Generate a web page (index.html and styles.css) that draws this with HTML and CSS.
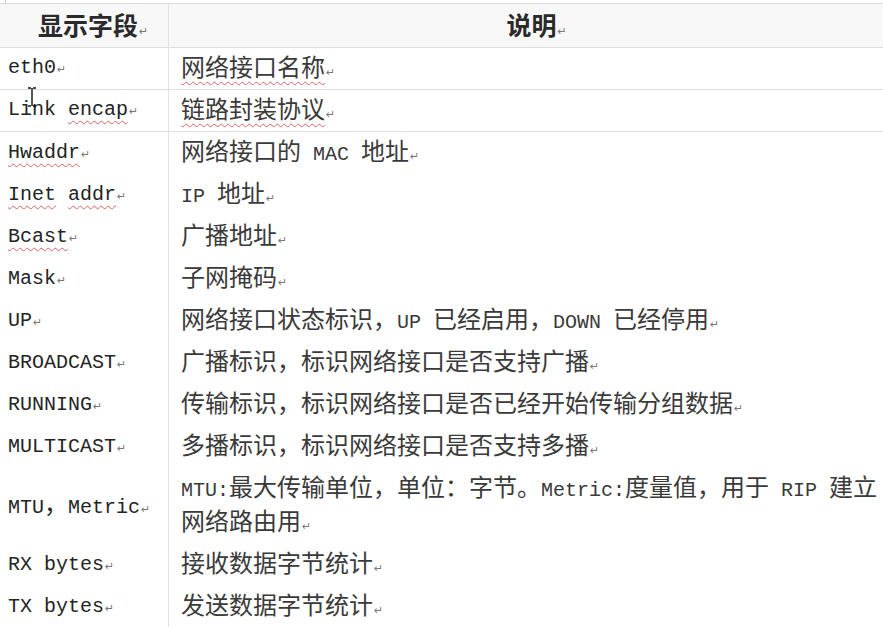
FILE: index.html
```html
<!DOCTYPE html>
<html lang="zh-CN">
<head>
    <meta charset="UTF-8">
    <title>ifconfig 显示字段</title>
    <link rel="stylesheet" href="styles.css">
</head>
<body>
    <span class="handle"></span>
    <div class="sheet">
        <div class="row head">
            <div class="cell key"><p>显示字段<span class="pm">↵</span></p></div>
            <div class="cell desc"><p>说明<span class="pm">↵</span></p></div>
        </div>
        <div class="row line">
            <div class="cell key"><p>eth0<span class="pm">↵</span></p></div>
            <div class="cell desc"><p><span class="typo">网络接口名称</span><span class="pm">↵</span></p></div>
        </div>
        <div class="row line">
            <div class="cell key"><p>Link <span class="typo">encap</span><span class="pm">↵</span></p></div>
            <div class="cell desc"><p><span class="typo">链路封装协议</span><span class="pm">↵</span></p></div>
        </div>
        <div class="row">
            <div class="cell key"><p><span class="typo">Hwaddr</span><span class="pm">↵</span></p></div>
            <div class="cell desc"><p>网络接口的<span class="en"> MAC </span>地址<span class="pm">↵</span></p></div>
        </div>
        <div class="row">
            <div class="cell key"><p><span class="typo">Inet</span> <span class="typo">addr</span><span class="pm">↵</span></p></div>
            <div class="cell desc"><p><span class="en">IP </span>地址<span class="pm">↵</span></p></div>
        </div>
        <div class="row">
            <div class="cell key"><p><span class="typo">Bcast</span><span class="pm">↵</span></p></div>
            <div class="cell desc"><p>广播地址<span class="pm">↵</span></p></div>
        </div>
        <div class="row">
            <div class="cell key"><p>Mask<span class="pm">↵</span></p></div>
            <div class="cell desc"><p>子网掩码<span class="pm">↵</span></p></div>
        </div>
        <div class="row">
            <div class="cell key"><p>UP<span class="pm">↵</span></p></div>
            <div class="cell desc"><p>网络接口状态标识，<span class="en">UP </span>已经启用，<span class="en">DOWN </span>已经停用<span class="pm">↵</span></p></div>
        </div>
        <div class="row">
            <div class="cell key"><p>BROADCAST<span class="pm">↵</span></p></div>
            <div class="cell desc"><p>广播标识，标识网络接口是否支持广播<span class="pm">↵</span></p></div>
        </div>
        <div class="row">
            <div class="cell key"><p>RUNNING<span class="pm">↵</span></p></div>
            <div class="cell desc"><p>传输标识，标识网络接口是否已经开始传输分组数据<span class="pm">↵</span></p></div>
        </div>
        <div class="row">
            <div class="cell key"><p>MULTICAST<span class="pm">↵</span></p></div>
            <div class="cell desc"><p>多播标识，标识网络接口是否支持多播<span class="pm">↵</span></p></div>
        </div>
        <div class="row tall">
            <div class="cell key"><p>MTU<span class="cjk">，</span>Metric<span class="pm">↵</span></p></div>
            <div class="cell desc"><p><span class="nowrap"><span class="en">MTU:</span>最大传输单位，单位：字节。<span class="en">Metric:</span>度量值，用于<span class="en"> RIP </span>建立</span><br>网络路由用<span class="pm">↵</span></p></div>
        </div>
        <div class="row">
            <div class="cell key"><p>RX bytes<span class="pm">↵</span></p></div>
            <div class="cell desc"><p>接收数据字节统计<span class="pm">↵</span></p></div>
        </div>
        <div class="row">
            <div class="cell key"><p>TX bytes<span class="pm">↵</span></p></div>
            <div class="cell desc"><p>发送数据字节统计<span class="pm">↵</span></p></div>
        </div>

        <!-- mouse cursor over the Link row -->
        <svg class="cursor" width="10" height="20" viewBox="0 0 10 20">
            <path d="M1 1h3M6 1h3M5 1v18M1 19h3M6 19h3" stroke="#111" stroke-width="1.4" fill="none"/>
        </svg>
    </div>
</body>
</html>
```

FILE: styles.css
```css
body {
    margin: 0;
    background: #fff;
    overflow: hidden;
    font-family: "Noto Sans CJK SC", sans-serif;
    color: #3a3a3a;
    text-autospace: no-autospace;
}
.handle {
    position: absolute;
    left: 0;
    top: 0;
    width: 5px;
    height: 4px;
    border: 1px solid #c8c8c8;
    border-left: none;
    border-top: none;
}
.sheet {
    width: 892px;
    margin-top: 3px;
    position: relative;
}
.row {
    display: grid;
    grid-template-columns: 168px 724px;
    height: 42px;
    box-sizing: border-box;
}
.row.line {
    border-bottom: 1px solid #dedede;
}
.head {
    height: 45px;
    border-top: 1px solid #dadada;
    border-bottom: 1px solid #dedede;
    background: #f8f8f8;
}
.tall {
    height: 76px;
}
.cell {
    display: flex;
    align-items: center;
    padding-left: 8px;
    font-size: 24px;
    line-height: 29px;
    min-width: 0;
}
.cell p {
    margin: 0;
}
.key {
    font-family: "Liberation Mono", "Noto Sans CJK SC", monospace;
    font-size: 20px;
    color: #242424;
}
.desc {
    border-left: 1px solid #e2e2e2;
    padding-left: 12px;
}
.head .cell {
    justify-content: center;
    padding-top: 4px;
    font-family: "Noto Sans CJK SC", sans-serif;
    font-size: 25px;
    font-weight: bold;
    color: #2a2a2a;
}
.head .key {
    padding-left: 18px;
}
.head .desc {
    padding-left: 12px;
}
.en {
    font-family: "Liberation Mono", monospace;
    font-size: 20px;
    white-space: pre;
}
.nowrap {
    white-space: nowrap;
}
.cjk {
    font-family: "Noto Sans CJK SC", sans-serif;
    font-size: 24px;
}
.typo {
    text-decoration: underline wavy #e06060 1px;
    text-underline-offset: 5px;
    text-decoration-skip-ink: none;
}
.pm {
    font-family: "DejaVu Sans", sans-serif;
    font-size: 11px;
    font-weight: normal;
    color: #777;
    margin-left: 1px;
}
.cursor {
    position: absolute;
    left: 27px;
    top: 84px;
}
```
